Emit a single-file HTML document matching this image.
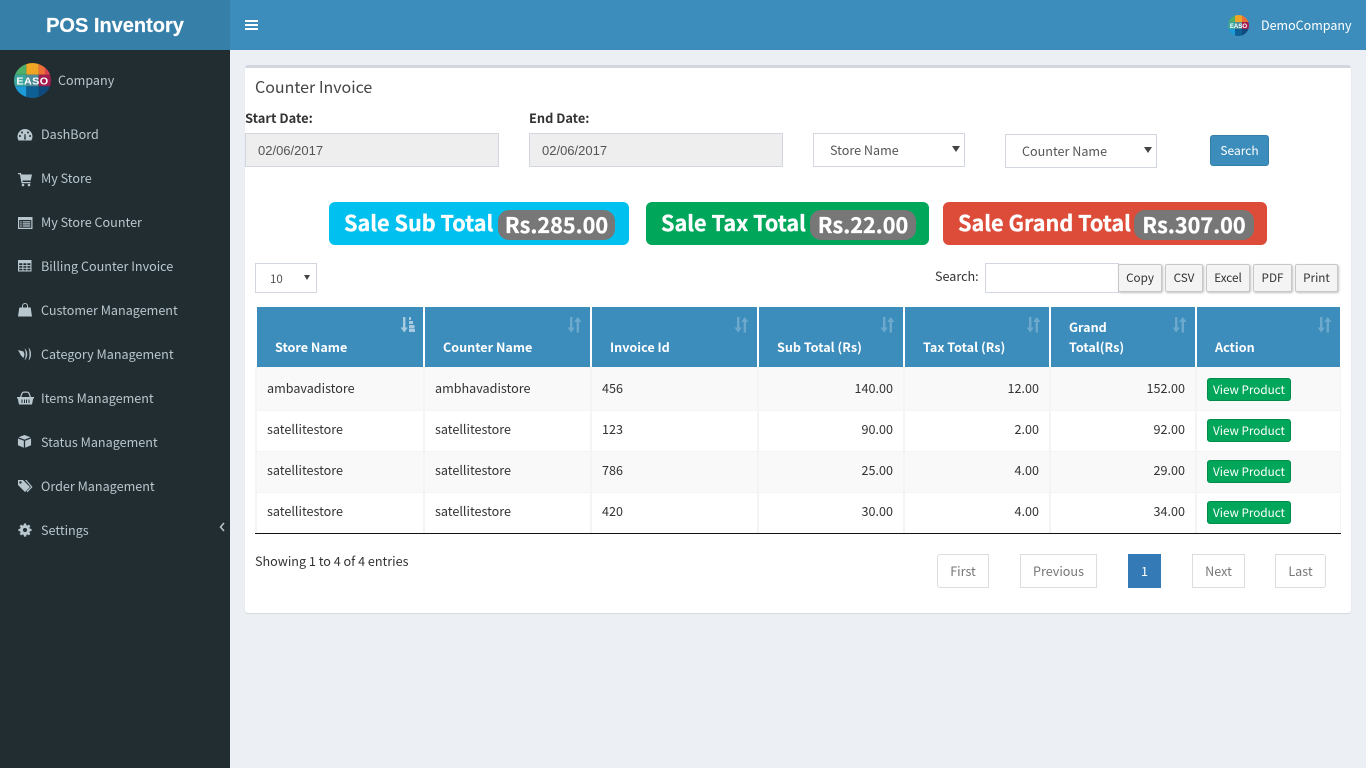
<!DOCTYPE html>
<html><head><meta charset="utf-8"><title>POS Inventory</title>
<style>
*{box-sizing:border-box}
html,body{margin:0;padding:0;width:1366px;height:768px;overflow:hidden;background:#ecf0f5}
body{font-family:"Noto Sans CJK JP","Liberation Sans",sans-serif;font-size:12.6px;color:#333;position:relative}
.a{position:absolute}
.t{position:absolute;white-space:nowrap;line-height:20px;height:20px}
.m{color:#b8c7ce;font-size:12.6px;left:41px}
.i{position:absolute;left:17px;width:16px;height:16px;fill:#b8c7ce}
.th{position:absolute;top:307px;height:60px;background:#3c8dbc}
.h{color:#fff;font-weight:700;font-size:12.6px}
.c{font-size:12.6px;color:#333}
.r{text-align:right}
.b{position:absolute;left:1207px;width:84px;height:23px;background:#00a65a;border:1px solid #008d4c;border-radius:3px;color:#fff;font-size:11.7px;line-height:21px;text-align:center;white-space:nowrap}
.dt{position:absolute;white-space:nowrap;top:264px;height:28px;background:#f4f4f4;border:1px solid #c8c8c8;border-radius:2px;box-shadow:1px 1px 2px rgba(0,0,0,.25);font-size:11.7px;line-height:26px;text-align:center;color:#333}
.p{position:absolute;top:554px;height:34px;border:1px solid #ddd;color:#777;font-size:12.6px;line-height:32px;text-align:center;background:#fff}
.s{position:absolute;top:202px;height:43px;border-radius:6px;color:#fff}
.s b{position:absolute;top:7px;font-size:21.6px;line-height:28px;white-space:nowrap;-webkit-text-stroke:.3px #fff}
.s i{position:absolute;top:8px;height:30px;background:#777;border-radius:11px;font-style:normal;font-weight:700;font-size:21.6px;line-height:29px;text-align:center;white-space:nowrap;-webkit-text-stroke:.3px #fff}
.f{position:absolute;background:#eee;border:1px solid #d2d6de;font-family:"Liberation Sans",sans-serif;font-size:13px;color:#555;line-height:33px;padding-left:12px}
.sel{position:absolute;background:#fff;border:1px solid #d2d6de;color:#555;font-size:12.6px;line-height:32px;padding-left:16px}
.sel:after{content:"";position:absolute;right:4px;top:12px;border:4px solid transparent;border-top:6px solid #444;border-bottom:0}
.lg{position:absolute;overflow:visible}
.lg text{font-family:"Liberation Sans",sans-serif;font-weight:700;fill:#fff;text-anchor:middle}
.v{position:absolute;top:367px;height:166px;width:2px;background:#f4f4f4}
.sa{position:absolute;top:317px;width:15px;height:16px;fill:#fff;opacity:.25}
</style></head><body>

<div class="a" style="left:0;top:0;width:230px;height:50px;background:#367fa9"></div>
<div class="a" style="left:230px;top:0;width:1136px;height:50px;background:#3c8dbc"></div>
<div class="a" style="left:0;top:50px;width:230px;height:718px;background:#222d32"></div>
<div class="t" style="left:0;width:230px;text-align:center;top:13px;height:26px;line-height:26px;font-family:'Liberation Sans',sans-serif;font-weight:700;font-size:20px;color:#fff;-webkit-text-stroke:.2px #fff">POS Inventory</div>
<svg class="a" style="left:245px;top:19px" width="13" height="13"><path d="M0 1h13v2H0zM0 5h13v2H0zM0 9h13v2H0z" fill="#fff"/></svg>

<svg class="lg" style="left:1228px;top:15px" width="21" height="21" viewBox="0 0 36 36"><defs><clipPath id="c1"><circle cx="18" cy="18" r="18"/></clipPath></defs><g clip-path="url(#c1)"><rect width="12" height="12" fill="#4dae6a"/><rect x="12" width="12" height="12" fill="#f0a524"/><rect x="24" width="12" height="12" fill="#ec6f35"/><rect y="12" width="12" height="12" fill="#3aa59c"/><rect x="12" y="12" width="12" height="12" fill="#4f8d9a"/><rect x="24" y="12" width="12" height="12" fill="#a21d4e"/><rect y="24" width="12" height="12" fill="#1c9bd8"/><rect x="12" y="24" width="12" height="12" fill="#0e5f94"/><rect x="24" y="24" width="12" height="12" fill="#0f4a7c"/></g><text x="18" y="22" font-size="10.500">EASO</text></svg>
<div class="t" style="left:1261px;top:15px;color:#fff;font-size:12.5px">DemoCompany</div>

<svg class="lg" style="left:14px;top:63px" width="37" height="35" viewBox="0 0 36 36" preserveAspectRatio="none"><defs><clipPath id="c2"><circle cx="18" cy="18" r="18"/></clipPath></defs><g clip-path="url(#c2)"><rect width="12" height="12" fill="#4dae6a"/><rect x="12" width="12" height="12" fill="#f0a524"/><rect x="24" width="12" height="12" fill="#ec6f35"/><rect x="30" y="4" width="6" height="8" fill="#d9434f"/><rect y="12" width="12" height="12" fill="#3aa59c"/><rect x="12" y="12" width="12" height="12" fill="#4f8d9a"/><rect x="24" y="12" width="12" height="12" fill="#a21d4e"/><rect y="24" width="12" height="12" fill="#1c9bd8"/><rect x="12" y="24" width="12" height="12" fill="#0e5f94"/><rect x="24" y="24" width="12" height="12" fill="#0f4a7c"/></g><text x="18" y="22" font-size="10.500" letter-spacing=".4">EASO</text></svg>
<div class="t" style="left:58px;top:70px;color:#b8c7ce;font-size:12.6px">Company</div>

<svg class="i" style="top:127px" viewBox="0 0 16 16"><path d="M8 2a7.500 7.500 0 0 0-7.500 7.500c0 1.500.4 2.900 1.100 4h12.800a7.500 7.500 0 0 0 1.100-4A7.500 7.500 0 0 0 8 2zM3 10a1 1 0 1 1 0-2 1 1 0 0 1 0 2zm2-3.500a1 1 0 1 1 0-2 1 1 0 0 1 0 2zM8.800 12.500H7.200l.3-5.500h1zM11 6.500a1 1 0 1 1 0-2 1 1 0 0 1 0 2zM13 10a1 1 0 1 1 0-2 1 1 0 0 1 0 2z"/></svg>
<div class="t m" style="top:124px">DashBord</div>
<svg class="i" style="top:171px" viewBox="0 0 16 16"><path d="M1 2h3l.4 1.500H15l-1.300 6H5.500l.3 1.500h7.700v1.300H4.500L2.900 3.300H1z"/><circle cx="6" cy="14" r="1.300"/><circle cx="12" cy="14" r="1.300"/></svg>
<div class="t m" style="top:168px">My Store</div>
<svg class="i" style="top:215px" viewBox="0 0 16 16"><path fill-rule="evenodd" d="M1 2h14.500v12H1zM2.200 5v7.800h12.100V5zM3.200 6.200h1.500v1.200H3.200zM5.700 6.200h7.600v1.200H5.700zM3.200 8.300h1.500v1.200H3.200zM5.700 8.300h7.600v1.200H5.700zM3.200 10.400h1.500v1.200H3.200zM5.700 10.400h7.600v1.200H5.700z"/></svg>
<div class="t m" style="top:212px">My Store Counter</div>
<svg class="i" style="top:258px" viewBox="0 0 16 16"><path fill-rule="evenodd" d="M1 2h13.500v11.500H1zM2.200 5.200v1.900h3.200V5.200zM6.400 5.200v1.900h3v-1.900zM10.400 5.200v1.900h3v-1.900zM2.200 8.100v1.700h3.200V8.100zM6.400 8.100v1.700h3V8.100zM10.400 8.100v1.700h3V8.100zM2.200 10.800v1.600h3.200v-1.600zM6.400 10.800v1.600h3v-1.600zM10.400 10.800v1.600h3v-1.600z"/></svg>
<div class="t m" style="top:256px">Billing Counter Invoice</div>
<svg class="i" style="top:302px" viewBox="0 0 16 16"><path d="M2.300 5.500H5V4a3 3 0 0 1 6 0v1.500h2.700L15 14.500H1zM6 5.500h4V4a2 2 0 0 0-4 0z" fill-rule="evenodd"/></svg>
<div class="t m" style="top:300px">Customer Management</div>
<svg class="i" style="top:346px" viewBox="0 0 16 16"><path d="M1 4l5.500 1.500 1 3-1 3.500L4 9.500zM7.500 2.500c1.800 1 2.700 3.200 2.700 5.700s-.9 4.800-2.700 5.800c.8-1.700 1.200-3.700 1.200-5.800s-.4-4-1.200-5.700zM11.500 1.800c1.700 1.200 2.500 3.700 2.500 6.400s-.8 5-2.500 6.300c.7-2 1-4.100 1-6.300s-.3-4.400-1-6.400z"/></svg>
<div class="t m" style="top:344px">Category Management</div>
<svg class="i" style="left:17px;width:17px;top:390px" viewBox="0 0 17 16"><path fill-rule="evenodd" d="M0 7h3l1.500-4C5 2 6 1.500 7 1.500h3c1 0 2 .5 2.500 1.500L14 7h3v1.500h-.8L15 14.500H2L.8 8.500H0zM4.300 7h8.400l-1.200-3.300c-.3-.7-.8-1-1.500-1H7c-.7 0-1.200.3-1.500 1zM4.500 9.500v3.500h1V9.500zM7 9.500v3.500h1V9.500zM9 9.500v3.500h1V9.500zM11.500 9.500v3.500h1V9.500z"/></svg>
<div class="t m" style="top:388px">Items Management</div>
<svg class="i" style="top:434px;left:17px;width:15px;height:15px" viewBox="0 0 16 16"><path d="M8 1l6.500 2.500L8 6 1.500 3.500zM1 4.800l6.300 2.400v7.500L1 12zM15 4.800l-6.300 2.400v7.500L15 12z"/></svg>
<div class="t m" style="top:432px">Status Management</div>
<svg class="i" style="top:478px" viewBox="0 0 16 16"><path fill-rule="evenodd" d="M1 2h5l7 7-5 5-7-7zM3.500 3.300a1.200 1.200 0 1 0 0 2.400 1.200 1.200 0 0 0 0-2.400z"/><path d="M8 2h1.500l6 7-5 5.200-1-1 4.500-4.200z"/></svg>
<div class="t m" style="top:476px">Order Management</div>
<svg class="i" style="top:523px;left:18px;width:14px;height:14px" viewBox="0 0 16 16"><path fill-rule="evenodd" d="M6.800 .5h2.400l.4 2 1.100.5 1.700-1.100 1.700 1.700-1.100 1.700.5 1.100 2 .4v2.400l-2 .4-.5 1.100 1.100 1.700-1.700 1.700-1.700-1.100-1.100.5-.4 2H6.800l-.4-2-1.100-.5-1.700 1.100-1.700-1.700 1.100-1.700-.5-1.100-2-.4V6.800l2-.4.5-1.100-1.100-1.700 1.700-1.700 1.700 1.100 1.100-.5zM8 5.700a2.300 2.300 0 1 0 0 4.600 2.300 2.300 0 0 0 0-4.600z"/></svg>
<div class="t m" style="top:520px">Settings</div>
<svg class="a" style="left:219px;top:522px" width="7" height="10"><path d="M5 1L1.500 5 5 9" stroke="#b8c7ce" stroke-width="1.500" fill="none"/></svg>

<div class="a" style="left:245px;top:65px;width:1106px;height:548px;background:#fff;border-top:3px solid #d2d6de;border-radius:3px;box-shadow:0 1px 1px rgba(0,0,0,.1)"></div>
<div class="t" style="left:255px;top:76px;font-size:16px;color:#444">Counter Invoice</div>
<div class="t" style="left:245px;top:108px;font-weight:700;font-size:12.9px">Start Date:</div>
<div class="t" style="left:529px;top:108px;font-weight:700;font-size:12.8px">End Date:</div>
<div class="f" style="left:245px;top:133px;width:254px;height:34px">02/06/2017</div>
<div class="f" style="left:529px;top:133px;width:254px;height:34px">02/06/2017</div>
<div class="sel" style="left:813px;top:133px;width:152px;height:34px">Store Name</div>
<div class="sel" style="left:1005px;top:134px;width:152px;height:34px">Counter Name</div>
<div class="a" style="left:1210px;top:135px;width:59px;height:31px;background:#3c8dbc;border:1px solid #367fa9;border-radius:3px;color:#fff;font-size:12px;line-height:29px;text-align:center">Search</div>

<div class="s" style="left:329px;width:300px;background:#00c0ef"><b style="left:15px">Sale Sub Total</b><i style="left:169px;width:117px">Rs.285.00</i></div>
<div class="s" style="left:646px;width:283px;background:#00a65a"><b style="left:15px">Sale Tax Total</b><i style="left:164px;width:106px">Rs.22.00</i></div>
<div class="s" style="left:943px;width:324px;background:#dd4b39"><b style="left:15px">Sale Grand Total</b><i style="left:191px;width:120px">Rs.307.00</i></div>

<div class="a" style="left:255px;top:263px;width:62px;height:30px;border:1px solid #d2d6de;background:#fff"></div>
<div class="t" style="left:270px;top:269px;font-size:11.5px;color:#555">10</div>
<div class="a" style="left:304px;top:275px;border:3px solid transparent;border-top:5px solid #444;border-bottom:0"></div>
<div class="t" style="left:935px;top:266px;font-size:12.6px">Search:</div>
<div class="a" style="left:985px;top:263px;width:134px;height:30px;border:1px solid #d2d6de;background:#fff"></div>
<div class="dt" style="left:1118px;width:44px">Copy</div>
<div class="dt" style="left:1165px;width:38px">CSV</div>
<div class="dt" style="left:1206px;width:44px">Excel</div>
<div class="dt" style="left:1253px;width:39px">PDF</div>
<div class="dt" style="left:1295px;width:43px">Print</div>

<div class="th" style="left:257px;width:166px"></div>
<div class="th" style="left:425px;width:165px"></div>
<div class="th" style="left:592px;width:165px"></div>
<div class="th" style="left:759px;width:144px"></div>
<div class="th" style="left:905px;width:144px"></div>
<div class="th" style="left:1051px;width:144px"></div>
<div class="th" style="left:1197px;width:143px"></div>
<div class="t h" style="left:275px;top:337px">Store Name</div>
<div class="t h" style="left:443px;top:337px">Counter Name</div>
<div class="t h" style="left:610px;top:337px">Invoice Id</div>
<div class="t h" style="left:777px;top:337px">Sub Total (Rs)</div>
<div class="t h" style="left:923px;top:337px">Tax Total (Rs)</div>
<div class="t h" style="left:1069px;top:317px">Grand</div>
<div class="t h" style="left:1069px;top:337px">Total(Rs)</div>
<div class="t h" style="left:1215px;top:337px">Action</div>

<svg class="sa" style="left:400px;opacity:.55" viewBox="0 0 15 16"><path d="M3 0h2.400v10.500h2.400L4.200 15.500.6 10.500H3zM9 0h2v3H9zM9 4h4v3H9zM9 8h5.500v3.500H9zM9 12h6v3H9z"/></svg>
<svg class="sa" style="left:567px" viewBox="0 0 15 16"><path d="M3 0h2.400v10.500h2.400L4.200 15.500.6 10.500H3zM12 15.500H9.600V5h-2.400L10.800 0l3.600 5H12z"/></svg>
<svg class="sa" style="left:734px" viewBox="0 0 15 16"><path d="M3 0h2.400v10.500h2.400L4.200 15.500.6 10.500H3zM12 15.500H9.600V5h-2.400L10.800 0l3.600 5H12z"/></svg>
<svg class="sa" style="left:880px" viewBox="0 0 15 16"><path d="M3 0h2.400v10.500h2.400L4.200 15.500.6 10.500H3zM12 15.500H9.600V5h-2.400L10.800 0l3.600 5H12z"/></svg>
<svg class="sa" style="left:1026px" viewBox="0 0 15 16"><path d="M3 0h2.400v10.500h2.400L4.200 15.500.6 10.500H3zM12 15.500H9.600V5h-2.400L10.800 0l3.600 5H12z"/></svg>
<svg class="sa" style="left:1172px" viewBox="0 0 15 16"><path d="M3 0h2.400v10.500h2.400L4.200 15.500.6 10.500H3zM12 15.500H9.600V5h-2.400L10.800 0l3.600 5H12z"/></svg>
<svg class="sa" style="left:1317px" viewBox="0 0 15 16"><path d="M3 0h2.400v10.500h2.400L4.200 15.500.6 10.500H3zM12 15.500H9.600V5h-2.400L10.800 0l3.600 5H12z"/></svg>

<div class="a" style="left:257px;top:367px;width:1083px;height:43px;background:#f9f9f9"></div>
<div class="a" style="left:257px;top:451px;width:1083px;height:41px;background:#f9f9f9"></div>
<div class="a" style="left:257px;top:410px;width:1083px;height:1px;background:#f4f4f4"></div>
<div class="a" style="left:257px;top:451px;width:1083px;height:1px;background:#f4f4f4"></div>
<div class="a" style="left:257px;top:492px;width:1083px;height:1px;background:#f4f4f4"></div>
<div class="v" style="left:423px"></div><div class="v" style="left:590px"></div><div class="v" style="left:757px"></div><div class="v" style="left:903px"></div><div class="v" style="left:1049px"></div><div class="v" style="left:1195px"></div><div class="v" style="left:1340px;width:1px"></div><div class="v" style="left:255px"></div>
<div class="a" style="left:255px;top:533px;width:1086px;height:1px;background:#111"></div>

<div class="t c" style="left:267px;top:378px">ambavadistore</div><div class="t c" style="left:435px;top:378px">ambhavadistore</div><div class="t c" style="left:602px;top:378px">456</div>
<div class="t c r" style="left:780px;width:113px;top:378px">140.00</div><div class="t c r" style="left:926px;width:113px;top:378px">12.00</div><div class="t c r" style="left:1072px;width:113px;top:378px">152.00</div>
<div class="b" style="top:378px">View Product</div>

<div class="t c" style="left:267px;top:419px">satellitestore</div><div class="t c" style="left:435px;top:419px">satellitestore</div><div class="t c" style="left:602px;top:419px">123</div>
<div class="t c r" style="left:780px;width:113px;top:419px">90.00</div><div class="t c r" style="left:926px;width:113px;top:419px">2.00</div><div class="t c r" style="left:1072px;width:113px;top:419px">92.00</div>
<div class="b" style="top:419px">View Product</div>

<div class="t c" style="left:267px;top:460px">satellitestore</div><div class="t c" style="left:435px;top:460px">satellitestore</div><div class="t c" style="left:602px;top:460px">786</div>
<div class="t c r" style="left:780px;width:113px;top:460px">25.00</div><div class="t c r" style="left:926px;width:113px;top:460px">4.00</div><div class="t c r" style="left:1072px;width:113px;top:460px">29.00</div>
<div class="b" style="top:460px">View Product</div>

<div class="t c" style="left:267px;top:501px">satellitestore</div><div class="t c" style="left:435px;top:501px">satellitestore</div><div class="t c" style="left:602px;top:501px">420</div>
<div class="t c r" style="left:780px;width:113px;top:501px">30.00</div><div class="t c r" style="left:926px;width:113px;top:501px">4.00</div><div class="t c r" style="left:1072px;width:113px;top:501px">34.00</div>
<div class="b" style="top:501px">View Product</div>

<div class="t" style="left:255px;top:551px;font-size:12.6px">Showing 1 to 4 of 4 entries</div>
<div class="p" style="left:937px;width:52px;border-radius:3px 0 0 3px">First</div>
<div class="p" style="left:1020px;width:77px">Previous</div>
<div class="p" style="left:1128px;width:33px;background:#337ab7;border-color:#337ab7;color:#fff">1</div>
<div class="p" style="left:1192px;width:53px">Next</div>
<div class="p" style="left:1275px;width:51px;border-radius:0 3px 3px 0">Last</div>
</body></html>
